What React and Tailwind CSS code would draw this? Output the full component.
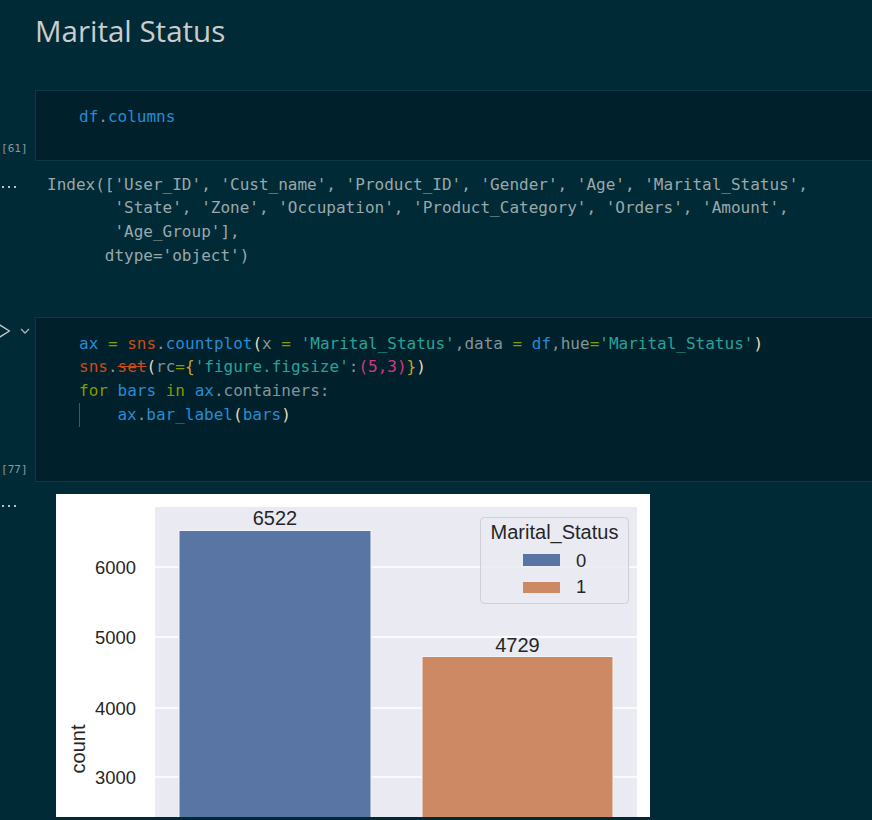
const C = {
  blue: "text-[#268bd2]",
  green: "text-[#859900]",
  orange: "text-[#cb4b16]",
  str: "text-[#2aa198]",
  fg: "text-[#839496]",
  b1: "text-[#e6dcb8]",
  b2: "text-[#c9a227]",
  b3: "text-[#d33682]",
};

function Dots() {
  return (
    <div className="flex gap-[4px] pl-[2px] pt-[2px]">
      <span className="w-[2px] h-[2px] bg-[#b8c2c6]" />
      <span className="w-[2px] h-[2px] bg-[#b8c2c6]" />
      <span className="w-[2px] h-[2px] bg-[#b8c2c6]" />
    </div>
  );
}

function ExecCount({ n }) {
  return (
    <span className="font-['DejaVu_Sans_Mono',monospace] text-[11px] leading-none text-[#8898a0] pl-[1px]">
      [{n}]
    </span>
  );
}

function Chart() {
  const grid = [73, 143, 214, 283];
  const ticks = [
    { y: 73, t: "6000" },
    { y: 143, t: "5000" },
    { y: 214, t: "4000" },
    { y: 283, t: "3000" },
  ];
  return (
    <svg width="594" height="323" viewBox="0 0 594 323" className="block bg-white">
      <rect x="99" y="13" width="482" height="310" fill="#eaeaf2" />
      {grid.map((y) => (
        <line key={y} x1="99" x2="581" y1={y} y2={y} stroke="#ffffff" strokeWidth="1.6" />
      ))}
      <rect x="123" y="36.5" width="192" height="300" fill="#5975a4" stroke="#f4f4f8" strokeWidth="1" />
      <rect x="366" y="162.5" width="191" height="200" fill="#cc8963" stroke="#f4f4f8" strokeWidth="1" />
      <g fontFamily="'Liberation Sans', Arial, sans-serif" fill="#262626">
        {ticks.map((k) => (
          <text key={k.t} x="80" y={k.y + 6.6} fontSize="18.4" textAnchor="end">
            {k.t}
          </text>
        ))}
        <text x="219" y="31" fontSize="20" textAnchor="middle">6522</text>
        <text x="461.5" y="157.5" fontSize="20" textAnchor="middle">4729</text>
        <text
          x="0"
          y="0"
          fontSize="20"
          textAnchor="middle"
          transform="translate(29 255) rotate(-90)"
        >
          count
        </text>
        <rect x="424.5" y="23.5" width="148" height="86" rx="4" fill="#eaeaf2" fillOpacity="0.8" stroke="#cfcfd6" />
        <text x="498.5" y="44.5" fontSize="20" textAnchor="middle">Marital_Status</text>
        <rect x="467" y="60" width="37" height="12" fill="#5975a4" />
        <rect x="467" y="88" width="37" height="11" fill="#cc8963" />
        <text x="520" y="73" fontSize="18.4">0</text>
        <text x="520" y="99" fontSize="18.4">1</text>
      </g>
    </svg>
  );
}

export default function App() {
  const mono = "font-['DejaVu_Sans_Mono',monospace] text-[16px] leading-[23.7px] whitespace-pre";
  return (
    <div className="w-[872px] h-[820px] overflow-hidden bg-[#002b36]">
      <div className="h-[90px] pl-[35px] pt-[11px]">
        <h1 className="font-['Open_Sans',sans-serif] text-[29.5px] leading-[40px] text-[#cccccc]">
          Marital Status
        </h1>
      </div>

      <div className="flex">
        <div className="w-[35px] shrink-0 flex flex-col justify-end pb-[7px]">
          <ExecCount n="61" />
        </div>
        <div className={`flex-1 bg-[#00212b] border border-r-0 border-[#0b3a47] pt-[14px] pb-[31px] pl-[43px] ${mono}`}>
          <div>
            <span className={C.blue}>df</span>
            <span className={C.fg}>.</span>
            <span className={C.blue}>columns</span>
          </div>
        </div>
      </div>

      <div className="flex h-[156px]">
        <div className="w-[35px] shrink-0 pt-[23px]">
          <Dots />
        </div>
        <div className={`pt-[12px] pl-[12px] text-[#9aa7ab] ${mono}`}>
          <div>Index(['User_ID', 'Cust_name', 'Product_ID', 'Gender', 'Age', 'Marital_Status',</div>
          <div>       'State', 'Zone', 'Occupation', 'Product_Category', 'Orders', 'Amount',</div>
          <div>       'Age_Group'],</div>
          <div>      dtype='object')</div>
        </div>
      </div>

      <div className="flex">
        <div className="w-[35px] shrink-0 flex flex-col justify-between pt-[6px] pb-[7px]">
          <div className="flex items-center gap-[9px] -ml-[2px]">
            <svg width="13" height="16" viewBox="0 0 13 16" fill="none" stroke="#c5c9cb" strokeWidth="1.4">
              <path d="M1 1.5 L11.5 8 L1 14.5 Z" strokeLinejoin="round" />
            </svg>
            <svg width="10" height="6" viewBox="0 0 10 6" fill="none" stroke="#aab3b7" strokeWidth="1.3">
              <path d="M1 1 L5 5 L9 1" />
            </svg>
          </div>
          <ExecCount n="77" />
        </div>
        <div className={`flex-1 bg-[#00212b] border border-r-0 border-[#0b3a47] pt-[14px] pb-[54px] pl-[43px] ${mono}`}>
          <div>
            <span className={C.blue}>ax</span>
            <span className={C.fg}> </span>
            <span className={C.green}>=</span>
            <span className={C.fg}> </span>
            <span className={C.orange}>sns</span>
            <span className={C.fg}>.</span>
            <span className={C.blue}>countplot</span>
            <span className={C.b1}>(</span>
            <span className={C.fg}>x </span>
            <span className={C.green}>=</span>
            <span className={C.fg}> </span>
            <span className={C.str}>'Marital_Status'</span>
            <span className={C.fg}>,data </span>
            <span className={C.green}>=</span>
            <span className={C.fg}> </span>
            <span className={C.blue}>df</span>
            <span className={C.fg}>,hue</span>
            <span className={C.green}>=</span>
            <span className={C.str}>'Marital_Status'</span>
            <span className={C.b1}>)</span>
          </div>
          <div>
            <span className={C.orange}>sns</span>
            <span className={C.fg}>.</span>
            <span className={`${C.orange} line-through`}>set</span>
            <span className={C.b1}>(</span>
            <span className={C.fg}>rc</span>
            <span className={C.green}>=</span>
            <span className={C.b2}>{"{"}</span>
            <span className={C.str}>'figure.figsize'</span>
            <span className={C.fg}>:</span>
            <span className={C.b3}>(5,3)</span>
            <span className={C.b2}>{"}"}</span>
            <span className={C.b1}>)</span>
          </div>
          <div>
            <span className={C.green}>for</span>
            <span className={C.fg}> </span>
            <span className={C.blue}>bars</span>
            <span className={C.fg}> </span>
            <span className={C.green}>in</span>
            <span className={C.fg}> </span>
            <span className={C.blue}>ax</span>
            <span className={C.fg}>.containers:</span>
          </div>
          <div className="flex">
            <span className="w-[38.4px] border-l border-[#3c5a64]" />
            <span className={C.blue}>ax</span>
            <span className={C.fg}>.</span>
            <span className={C.blue}>bar_label</span>
            <span className={C.b1}>(</span>
            <span className={C.blue}>bars</span>
            <span className={C.b1}>)</span>
          </div>
        </div>
      </div>

      <div className="flex pt-[12px]">
        <div className="w-[56px] shrink-0 pt-[9px]">
          <Dots />
        </div>
        <Chart />
      </div>
    </div>
  );
}
